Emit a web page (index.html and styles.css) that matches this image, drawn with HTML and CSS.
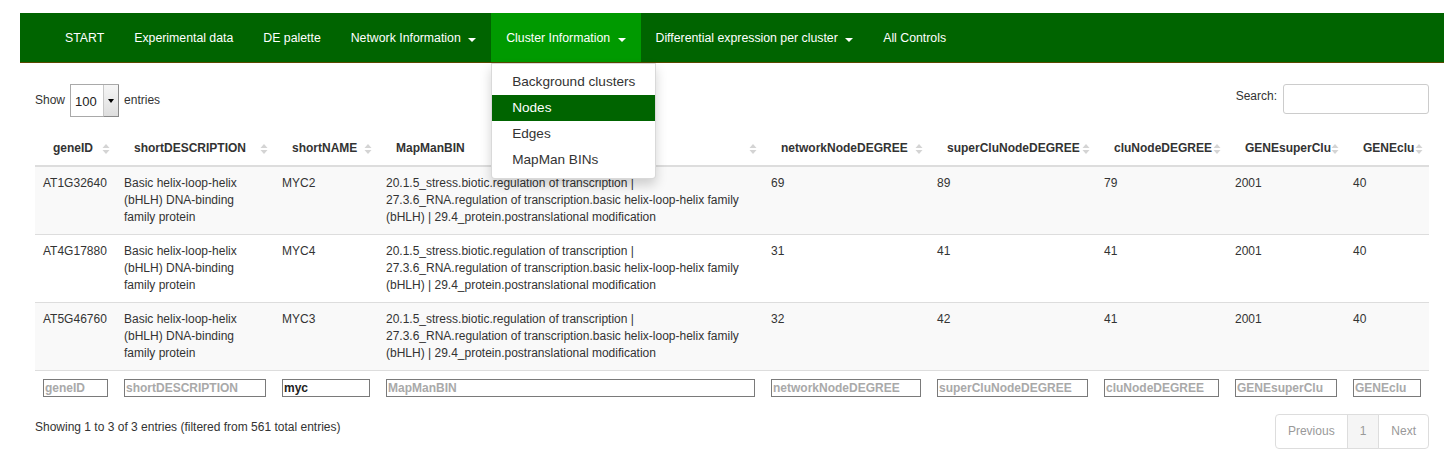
FILE: index.html
```html
<!DOCTYPE html>
<html lang="en">
<head>
<meta charset="utf-8">
<title>Cluster Information - Nodes</title>
<link rel="stylesheet" href="styles.css">
</head>
<body>
<div class="page">
  <nav class="navbar">
    <ul class="nav">
      <li class="nav-item"><a class="nav-link" href="#">START</a></li>
      <li class="nav-item"><a class="nav-link" href="#">Experimental data</a></li>
      <li class="nav-item"><a class="nav-link" href="#">DE palette</a></li>
      <li class="nav-item"><a class="nav-link" href="#">Network Information <span class="caret"></span></a></li>
      <li class="nav-item active">
        <a class="nav-link" href="#">Cluster Information <span class="caret"></span></a>
        <ul class="dropdown">
          <li><a class="dropdown-item" href="#">Background clusters</a></li>
          <li><a class="dropdown-item selected" href="#">Nodes</a></li>
          <li><a class="dropdown-item" href="#">Edges</a></li>
          <li><a class="dropdown-item" href="#">MapMan BINs</a></li>
        </ul>
      </li>
      <li class="nav-item"><a class="nav-link" href="#">Differential expression per cluster <span class="caret"></span></a></li>
      <li class="nav-item"><a class="nav-link" href="#">All Controls</a></li>
    </ul>
  </nav>

  <div class="content">
    <div class="table-top">
      <div class="length">
        <span>Show</span>
        <span class="select-box"><span class="select-value">100</span><span class="select-btn"><span class="select-arrow"></span></span></span>
        <span>entries</span>
      </div>
      <label class="search"><span class="search-label">Search:</span> <input class="search-input" type="search"></label>
    </div>

    <table class="data">
      <colgroup>
        <col class="c-id"><col class="c-desc"><col class="c-name"><col class="c-bin"><col class="c-net"><col class="c-super"><col class="c-clu"><col class="c-gsuper"><col class="c-gclu">
      </colgroup>
      <thead>
        <tr>
          <th>geneID<span class="sort"><svg width="8" height="12" viewBox="0 0 8 12"><path d="M0.5 5 L4 1 L7.5 5Z M0.5 7 L4 11 L7.5 7Z"/></svg></span></th>
          <th>shortDESCRIPTION<span class="sort"><svg width="8" height="12" viewBox="0 0 8 12"><path d="M0.5 5 L4 1 L7.5 5Z M0.5 7 L4 11 L7.5 7Z"/></svg></span></th>
          <th>shortNAME<span class="sort"><svg width="8" height="12" viewBox="0 0 8 12"><path d="M0.5 5 L4 1 L7.5 5Z M0.5 7 L4 11 L7.5 7Z"/></svg></span></th>
          <th>MapManBIN<span class="sort"><svg width="8" height="12" viewBox="0 0 8 12"><path d="M0.5 5 L4 1 L7.5 5Z M0.5 7 L4 11 L7.5 7Z"/></svg></span></th>
          <th>networkNodeDEGREE<span class="sort"><svg width="8" height="12" viewBox="0 0 8 12"><path d="M0.5 5 L4 1 L7.5 5Z M0.5 7 L4 11 L7.5 7Z"/></svg></span></th>
          <th>superCluNodeDEGREE<span class="sort"><svg width="8" height="12" viewBox="0 0 8 12"><path d="M0.5 5 L4 1 L7.5 5Z M0.5 7 L4 11 L7.5 7Z"/></svg></span></th>
          <th>cluNodeDEGREE<span class="sort"><svg width="8" height="12" viewBox="0 0 8 12"><path d="M0.5 5 L4 1 L7.5 5Z M0.5 7 L4 11 L7.5 7Z"/></svg></span></th>
          <th>GENEsuperClu<span class="sort"><svg width="8" height="12" viewBox="0 0 8 12"><path d="M0.5 5 L4 1 L7.5 5Z M0.5 7 L4 11 L7.5 7Z"/></svg></span></th>
          <th>GENEclu<span class="sort"><svg width="8" height="12" viewBox="0 0 8 12"><path d="M0.5 5 L4 1 L7.5 5Z M0.5 7 L4 11 L7.5 7Z"/></svg></span></th>
        </tr>
      </thead>
      <tbody>
        <tr>
          <td>AT1G32640</td>
          <td>Basic helix-loop-helix (bHLH) DNA-binding family protein</td>
          <td>MYC2</td>
          <td>20.1.5_stress.biotic.regulation of transcription | 27.3.6_RNA.regulation of transcription.basic helix-loop-helix family (bHLH) | 29.4_protein.postranslational modification</td>
          <td>69</td><td>89</td><td>79</td><td>2001</td><td>40</td>
        </tr>
        <tr>
          <td>AT4G17880</td>
          <td>Basic helix-loop-helix (bHLH) DNA-binding family protein</td>
          <td>MYC4</td>
          <td>20.1.5_stress.biotic.regulation of transcription | 27.3.6_RNA.regulation of transcription.basic helix-loop-helix family (bHLH) | 29.4_protein.postranslational modification</td>
          <td>31</td><td>41</td><td>41</td><td>2001</td><td>40</td>
        </tr>
        <tr>
          <td>AT5G46760</td>
          <td>Basic helix-loop-helix (bHLH) DNA-binding family protein</td>
          <td>MYC3</td>
          <td>20.1.5_stress.biotic.regulation of transcription | 27.3.6_RNA.regulation of transcription.basic helix-loop-helix family (bHLH) | 29.4_protein.postranslational modification</td>
          <td>32</td><td>42</td><td>41</td><td>2001</td><td>40</td>
        </tr>
      </tbody>
      <tfoot>
        <tr>
          <td><input class="filter" placeholder="geneID"></td>
          <td><input class="filter" placeholder="shortDESCRIPTION"></td>
          <td><input class="filter" value="myc"></td>
          <td><input class="filter" placeholder="MapManBIN"></td>
          <td><input class="filter" placeholder="networkNodeDEGREE"></td>
          <td><input class="filter" placeholder="superCluNodeDEGREE"></td>
          <td><input class="filter" placeholder="cluNodeDEGREE"></td>
          <td><input class="filter" placeholder="GENEsuperClu"></td>
          <td><input class="filter" placeholder="GENEclu"></td>
        </tr>
      </tfoot>
    </table>

    <div class="table-bottom">
      <div class="info">Showing 1 to 3 of 3 entries (filtered from 561 total entries)</div>
      <div class="pagination">
        <a class="page-btn first" href="#">Previous</a>
        <a class="page-btn current" href="#">1</a>
        <a class="page-btn last" href="#">Next</a>
      </div>
    </div>
  </div>
</div>
</body>
</html>
```

FILE: styles.css
```css
* { box-sizing: border-box; }

body {
  margin: 0;
  font-family: "Liberation Sans", Arial, sans-serif;
  font-size: 12px;
  color: #333;
  background: #fff;
}

.page {
  width: 1444px;
  padding: 13px 0 0 20px;
}

/* Navbar */
.navbar {
  height: 50px;
  background: #006400;
  border-bottom: 1px solid #5a4800;
}

.nav {
  display: flex;
  list-style: none;
  margin: 0;
  padding: 0 0 0 30px;
  height: 49px;
}

.nav-item {
  position: relative;
}

.nav-link {
  display: block;
  padding: 16px 15px 14px;
  line-height: 19px;
  font-size: 12.3px;
  color: #fff;
  text-decoration: none;
  white-space: nowrap;
}

.nav-item.active > .nav-link {
  background: #009a00;
}

.caret {
  display: inline-block;
  width: 0;
  height: 0;
  margin-left: 4px;
  vertical-align: middle;
  border-top: 4px solid #fff;
  border-left: 4px solid transparent;
  border-right: 4px solid transparent;
  position: relative;
  top: 1px;
}

.dropdown {
  position: absolute;
  top: 50px;
  left: 0;
  z-index: 10;
  min-width: 165px;
  margin: 0;
  padding: 5px 0;
  list-style: none;
  background: #fff;
  border: 1px solid rgba(0, 0, 0, 0.15);
  border-radius: 0 0 4px 4px;
  box-shadow: 0 6px 12px rgba(0, 0, 0, 0.175);
  font-size: 13.6px;
}

.dropdown-item {
  display: block;
  padding: 3px 20px;
  line-height: 20px;
  color: #333;
  text-decoration: none;
  white-space: nowrap;
}

.dropdown-item.selected {
  background: #006400;
  color: #fff;
}

/* Content */
.content {
  padding: 0 15px;
}

.table-top {
  display: flex;
  justify-content: space-between;
  align-items: flex-start;
  padding-top: 21px;
  height: 69px;
}

.length {
  display: flex;
  align-items: center;
  gap: 5px;
  height: 32px;
}

.select-box {
  display: flex;
  width: 49px;
  height: 33px;
  border: 1px solid #a9a9a9;
  background: #fff;
  margin-top: 1px;
}

.select-value {
  flex: 1;
  padding: 9px 0 0 4px;
  font-size: 13px;
  color: #222;
}

.select-btn {
  width: 16px;
  height: 32px;
  display: flex;
  align-items: center;
  justify-content: center;
  background: linear-gradient(#f6f6f6, #dedede);
  border-left: 1px solid #c8c8c8;
  border-right: 1px solid #8a8a8a;
  border-bottom: 1px solid #8a8a8a;
  margin-right: -1px;
}

.select-arrow {
  width: 0;
  height: 0;
  border-top: 4px solid #000;
  border-left: 3.5px solid transparent;
  border-right: 3.5px solid transparent;
}

.search {
  display: flex;
  align-items: flex-start;
  gap: 6px;
}

.search-label {
  padding-top: 4px;
  line-height: 17px;
}

.search-input {
  width: 146px;
  height: 30px;
  border: 1px solid #ccc;
  border-radius: 3px;
  font: inherit;
  padding: 4px 8px;
}

/* Table */
.data {
  width: 1394px;
  table-layout: fixed;
  border-collapse: collapse;
}

.c-id { width: 81px; }
.c-desc { width: 158px; }
.c-name { width: 104px; }
.c-bin { width: 385px; }
.c-net { width: 166px; }
.c-super { width: 167px; }
.c-clu { width: 131px; }
.c-gsuper { width: 118px; }
.c-gclu { width: 84px; }

.data th {
  position: relative;
  padding: 8px 18px;
  text-align: left;
  font-weight: bold;
  line-height: 17px;
  white-space: nowrap;
  color: #333;
  border-bottom: 2px solid #ddd;
}

.sort {
  position: absolute;
  right: 6px;
  top: 50%;
  transform: translateY(-50%);
  height: 12px;
  line-height: 0;
}

.sort svg {
  fill: #d4d4d4;
}

.data td {
  padding: 8px;
  line-height: 17px;
  vertical-align: top;
  border-top: 1px solid #ddd;
}

.data tbody tr:nth-child(odd) {
  background: #f9f9f9;
}

.filter {
  display: block;
  width: 100%;
  height: 18px;
  padding: 0 1px;
  border: 1px solid #7a7a7a;
  border-radius: 0;
  font-family: "Liberation Sans", Arial, sans-serif;
  font-size: 12px;
  font-weight: bold;
  color: #222;
  background: #fff;
}

.filter::placeholder {
  color: #a9a9a9;
}

/* Bottom */
.table-bottom {
  display: flex;
  justify-content: space-between;
  align-items: flex-start;
  padding-top: 9px;
}

.info {
  padding-top: 5px;
  line-height: 17px;
}

.pagination {
  display: flex;
}

.page-btn {
  display: block;
  padding: 8px 12px;
  line-height: 17px;
  border: 1px solid #ddd;
  margin-left: -1px;
  color: #999;
  background: #fff;
  text-decoration: none;
}

.page-btn.first {
  margin-left: 0;
  border-radius: 4px 0 0 4px;
}

.page-btn.last {
  border-radius: 0 4px 4px 0;
}

.page-btn.current {
  background: #f5f5f5;
}
```
